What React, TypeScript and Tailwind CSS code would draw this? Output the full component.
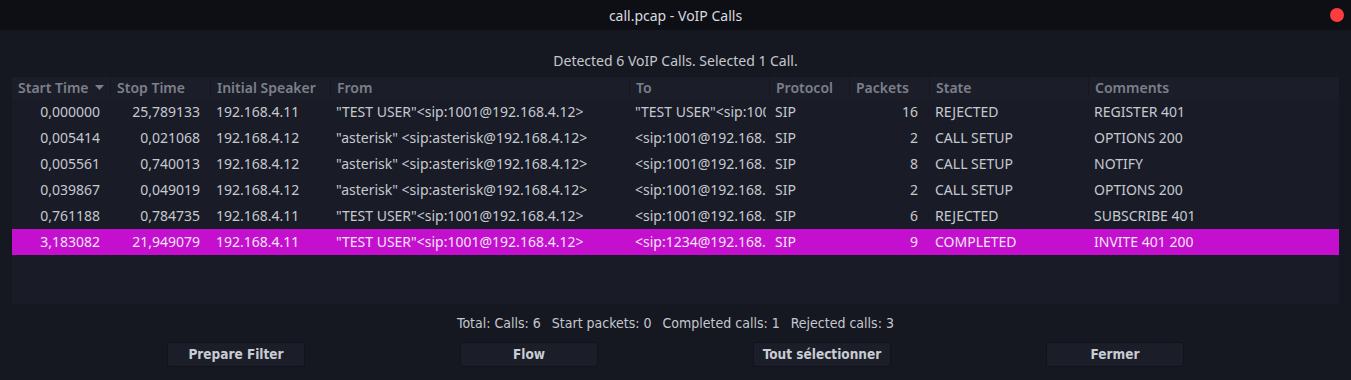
import React from "react";

type Row = {
  start: string;
  stop: string;
  speaker: string;
  from: string;
  to: string;
  proto: string;
  packets: string;
  state: string;
  comments: string;
  selected?: boolean;
};

const rows: Row[] = [
  { start: "0,000000", stop: "25,789133", speaker: "192.168.4.11", from: '"TEST USER"<sip:1001@192.168.4.12>', to: '"TEST USER"<sip:1001@192.168.4.12>', proto: "SIP", packets: "16", state: "REJECTED", comments: "REGISTER 401" },
  { start: "0,005414", stop: "0,021068", speaker: "192.168.4.12", from: '"asterisk" <sip:asterisk@192.168.4.12>', to: "<sip:1001@192.168.4.11>", proto: "SIP", packets: "2", state: "CALL SETUP", comments: "OPTIONS 200" },
  { start: "0,005561", stop: "0,740013", speaker: "192.168.4.12", from: '"asterisk" <sip:asterisk@192.168.4.12>', to: "<sip:1001@192.168.4.11>", proto: "SIP", packets: "8", state: "CALL SETUP", comments: "NOTIFY" },
  { start: "0,039867", stop: "0,049019", speaker: "192.168.4.12", from: '"asterisk" <sip:asterisk@192.168.4.12>', to: "<sip:1001@192.168.4.11>", proto: "SIP", packets: "2", state: "CALL SETUP", comments: "OPTIONS 200" },
  { start: "0,761188", stop: "0,784735", speaker: "192.168.4.11", from: '"TEST USER"<sip:1001@192.168.4.12>', to: "<sip:1001@192.168.4.11>", proto: "SIP", packets: "6", state: "REJECTED", comments: "SUBSCRIBE 401" },
  { start: "3,183082", stop: "21,949079", speaker: "192.168.4.11", from: '"TEST USER"<sip:1001@192.168.4.12>', to: "<sip:1234@192.168.4.11>", proto: "SIP", packets: "9", state: "COMPLETED", comments: "INVITE 401 200", selected: true },
];

const headers = [
  { label: "Start Time", w: "w-[99px]", sort: true },
  { label: "Stop Time", w: "w-[100px]" },
  { label: "Initial Speaker", w: "w-[120px]" },
  { label: "From", w: "w-[299px]" },
  { label: "To", w: "w-[140px]" },
  { label: "Protocol", w: "w-[80px]" },
  { label: "Packets", w: "w-[80px]" },
  { label: "State", w: "w-[159px]" },
  { label: "Comments", w: "flex-1" },
];

const cellBase = "h-full flex items-center overflow-hidden whitespace-nowrap";

function Cell({ w, children, right, pr }: { w: string; children: React.ReactNode; right?: boolean; pr?: string }) {
  return (
    <div className={`${w} ${cellBase} ${right ? `justify-end ${pr ?? "pr-[11px]"}` : "pl-[5px] pr-[4px]"}`}>
      <span className="block overflow-hidden whitespace-nowrap min-w-0">{children}</span>
    </div>
  );
}

function Button({ label }: { label: string }) {
  return (
    <div
      className="w-[138px] h-[25px] flex items-center justify-center rounded-[3px] bg-[#1b1e29] border border-[#11131a] text-[13.5px] font-bold text-[#c9ccd2]"
      style={{ fontFamily: '"DejaVu Sans Condensed", "DejaVu Sans", sans-serif', fontStretch: "condensed" }}
    >
      {label}
    </div>
  );
}

export default function App() {
  return (
    <div
      className="w-[1351px] h-[380px] bg-[#161821] flex flex-col overflow-hidden"
      style={{ fontFamily: '"Noto Sans", sans-serif' }}
    >
      {/* Title bar */}
      <div className="h-[30px] shrink-0 bg-[#0e0f14] flex items-center justify-center relative">
        <span className="text-[14px] text-[#d9dbe0]">call.pcap - VoIP Calls</span>
        <div className="absolute right-[7px] top-[8px] w-[14px] h-[14px] rounded-full bg-[#fd3d3d]" />
      </div>

      <div className="flex-1 flex flex-col px-3">
        <div className="mt-[20px] h-[20px] flex items-center justify-center text-[14px] text-[#c5c8ce]">
          Detected 6 VoIP Calls. Selected 1 Call.
        </div>

        {/* Table */}
        <div className="mt-[7px] h-[227px] bg-[#191c27] flex flex-col text-[14px]">
          <div className="h-[22px] flex bg-[#1b1e29] pb-[2px]">
            {headers.map((h, i) => (
              <div
                key={h.label}
                className={`${h.w} ${cellBase} pl-[6px] font-semibold text-[#7d808a] ${i < headers.length - 1 ? "border-r border-[#161821]" : ""}`}
              >
                <span>{h.label}</span>
                {h.sort && (
                  <svg className="ml-[6px]" width="9" height="5" viewBox="0 0 9 5">
                    <path d="M0 0 L9 0 L4.5 5 Z" fill="#7d808a" />
                  </svg>
                )}
              </div>
            ))}
          </div>
          {rows.map((r, idx) => (
            <div
              key={idx}
              className={`h-[26px] flex pb-[1px] ${r.selected ? "bg-[#c50fce] text-[#f2e6f4]" : "text-[#c6c9cf]"}`}
            >
              <Cell w="w-[99px]" right>{r.start}</Cell>
              <Cell w="w-[100px]" right>{r.stop}</Cell>
              <Cell w="w-[120px]">{r.speaker}</Cell>
              <Cell w="w-[299px]">{r.from}</Cell>
              <Cell w="w-[140px]">{r.to}</Cell>
              <Cell w="w-[80px]">{r.proto}</Cell>
              <Cell w="w-[80px]" right pr="pr-[12px]">{r.packets}</Cell>
              <Cell w="w-[159px]">{r.state}</Cell>
              <Cell w="flex-1">{r.comments}</Cell>
            </div>
          ))}
        </div>

        <div
          className="mt-[9px] h-[20px] flex items-center justify-center gap-[11px] text-[14px] text-[#c5c8ce]"
          style={{ fontFamily: '"DejaVu Sans Condensed", "DejaVu Sans", sans-serif', fontStretch: "condensed" }}
        >
          <span>Total: Calls: 6</span>
          <span>Start packets: 0</span>
          <span>Completed calls: 1</span>
          <span>Rejected calls: 3</span>
        </div>

        <div className="mt-[9px] flex justify-evenly">
          <Button label="Prepare Filter" />
          <Button label="Flow" />
          <Button label="Tout sélectionner" />
          <Button label="Fermer" />
        </div>
      </div>
    </div>
  );
}
